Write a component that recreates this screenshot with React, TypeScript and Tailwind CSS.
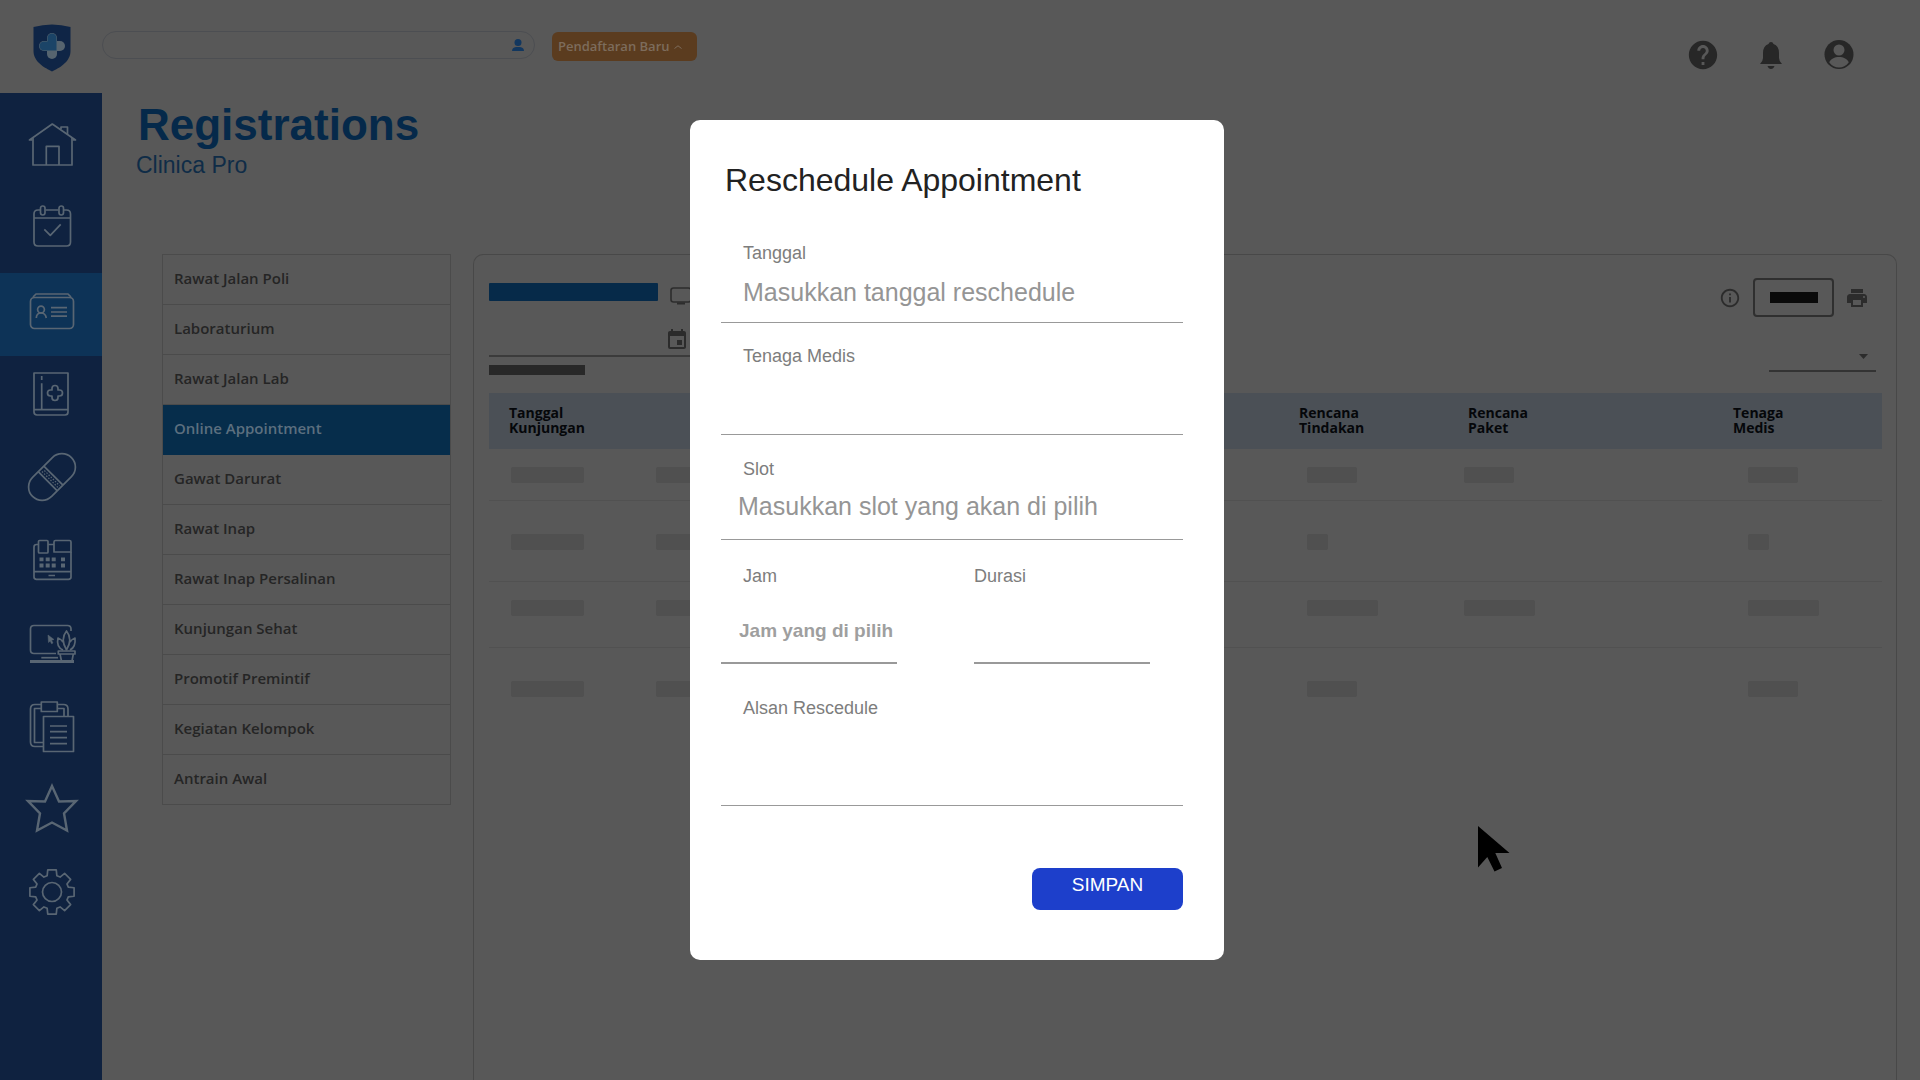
import React from "react";
import { MdPrint, MdInfoOutline, MdEvent, MdHelp } from "react-icons/md";

const gearPath = (() => {
  const pts: string[] = [];
  for (let i = 0; i < 8; i++) {
    const a = (i * Math.PI) / 4 - Math.PI / 2;
    const corners: [number, number][] = [
      [17, -0.29],
      [22.5, -0.19],
      [22.5, 0.19],
      [17, 0.29],
    ];
    corners.forEach(([r, o]) => {
      pts.push(`${(24 + r * Math.cos(a + o)).toFixed(2)} ${(24 + r * Math.sin(a + o)).toFixed(2)}`);
    });
  }
  return `M${pts.join("L")}Z`;
})();

const navItems: { label: string; active?: boolean; drawing: React.ReactNode }[] = [
  {
    label: "Beranda",
    drawing: (
      <>
        <path d="M5 17V44H44V17" />
        <path d="M4.5 19H1.5L24.3 3L47.5 19H44.5" />
        <path d="M33 8V6H39.5V13" />
        <path d="M18.3 44V25.3H31V44" />
      </>
    ),
  },
  {
    label: "Jadwal",
    drawing: (
      <>
        <path d="M12 6H10Q6 6 6 10V38Q6 42 10 42H38.500Q42.500 42 42.500 38V10Q42.500 6 38.500 6H36M17.500 6H30.500M6 14H42.500" />
        <rect x="12.500" y="2" width="4.500" height="9" rx="2.200" />
        <rect x="31" y="2" width="4.500" height="9" rx="2.200" />
        <path d="M16.300 25.300L22.300 31.300L32.700 20.300" />
      </>
    ),
  },
  {
    label: "Registrasi",
    active: true,
    drawing: (
      <>
        <rect x="2.500" y="10.500" width="43" height="31" rx="4" />
        <path d="M5 10L8 7H40L43 10" />
        <circle cx="13" cy="22.500" r="3.400" />
        <path d="M8.300 31Q8.500 26 13 26T18.300 31" />
        <path d="M23 20.700H39M23 25H39M23 29.200H39" />
      </>
    ),
  },
  {
    label: "Rekam medis",
    drawing: (
      <>
        <path d="M6 3H40V42Q40 45 37 45H9Q6 45 6 42ZM6 39.700H40M13.700 13.300V39.700M13.700 6V10" />
        <path d="M24 20V18.500A3 3 0 0 1 30 18.500V20H31.500A3 3 0 0 1 31.500 26H30V27.500A3 3 0 0 1 24 27.500V26H22.500A3 3 0 0 1 22.500 20Z" />
      </>
    ),
  },
  {
    label: "Farmasi",
    drawing: (
      <g transform="rotate(-45 24 24)">
        <rect x="-3.500" y="10.500" width="55" height="27" rx="13.500" />
        <path d="M18 10.500V37.500M26 10.500V37.500" />
        <path d="M20.800 13V35.500M23.200 14V35.500" strokeDasharray="1.500 1.500" strokeWidth="1.200" />
      </g>
    ),
  },
  {
    label: "Kasir",
    drawing: (
      <>
        <path d="M10 8.500H8.500Q6 8.500 6 11V41Q6 43.300 8.500 43.300H40.500Q43 43.300 43 41V16M20 8.500H26M6 35.700H43M20.500 39.500H27" />
        <rect x="10.500" y="4.500" width="9.500" height="12.500" rx="1" />
        <path d="M26 16V6Q26 4.500 27.500 4.500H41.500Q43 4.500 43 6V16Z" />
        <path d="M11.500 23.300H15.500M17.700 23.300H21.700M23.700 23.300H27.700M33 23.300H37M11.500 29.500H15.500M17.700 29.500H21.700M23.700 29.500H27.700M33 29.500H37" strokeWidth="3.800" />
      </>
    ),
  },
  {
    label: "Ruang kerja",
    drawing: (
      <>
        <path d="M28 34.500H6Q2.500 34.500 2.500 31V10Q2.500 6.500 6 6.500H39.500Q43 6.500 43 10V12" />
        <path d="M13.300 38.700H30" />
        <path d="M2 42.500H46" strokeWidth="2.800" />
        <path d="M20 16L26 20.500L23.600 21.200L25 24L23.500 24.700L22.200 22L20.500 23.500Z" fill="currentColor" strokeWidth="0.500" />
        <path d="M30.300 32H47V35H30.300ZM32 35L33.500 42M45.300 35L44 42" />
        <path d="M38.500 31Q32 20 38.500 12Q45 20 38.500 31M35 31Q28 28 30 19Q33 20 35 23M42 31Q48 28 47 19Q44 20 42 23" />
      </>
    ),
  },
  {
    label: "Laporan",
    drawing: (
      <>
        <path d="M13 2.500H7Q2.500 2.500 2.500 7V40Q2.500 44.500 7 44.500H15M29.500 2.500H35.500Q40 2.500 40 7V14" />
        <path d="M13 6.500H6.500V40.500H15M29.500 6.500H36V14" />
        <rect x="13.300" y="0" width="16" height="9.500" />
        <rect x="15.500" y="14.500" width="30" height="35" />
        <path d="M22 24H39M22 29.700H39M22 35.700H39M22 41.700H39" />
      </>
    ),
  },
  {
    label: "Favorit",
    drawing: (
      <path
        strokeWidth="2.400"
        strokeLinejoin="miter"
        d="M24 1L31 16.500L48 16L36 28.300L39 45.500L24 37.500L9 45.500L12 28.300L0 16L17 16.500Z"
      />
    ),
  },
  {
    label: "Pengaturan",
    drawing: (
      <>
        <path d={gearPath} />
        <circle cx="24" cy="24" r="9.500" />
      </>
    ),
  },
];

const categories = [
  "Rawat Jalan Poli",
  "Laboraturium",
  "Rawat Jalan Lab",
  "Online Appointment",
  "Gawat Darurat",
  "Rawat Inap",
  "Rawat Inap Persalinan",
  "Kunjungan Sehat",
  "Promotif Premintif",
  "Kegiatan Kelompok",
  "Antrain Awal",
];

const rows = [
  { size: "h-[51px]", pad: "pt-[18px]", bar: "w-[50px]", paket: true },
  { size: "h-[81px]", pad: "pt-[33px]", bar: "w-[21px]", paket: false },
  { size: "h-[66px]", pad: "pt-[18px]", bar: "w-[71px]", paket: true },
  { size: "h-[84px]", pad: "pt-[33px]", bar: "w-[50px]", paket: false },
];

function Header() {
  return (
    <header className="flex h-[93px] shrink-0 items-start">
      <a href="#" aria-label="Clinica Pro" className="flex w-[102px] shrink-0 justify-center pt-[24px]">
        <svg width="38" height="48" viewBox="0 0 38 48" className="ml-[2px]">
          <path d="M.5 3Q19-2 37.500 3V27C37.500 38 26 44 19 47.500C12 44 .5 38 .5 27Z" fill="#0f2546" />
          <rect x="14" y="9" width="10" height="26" rx="5" fill="#56646f" />
          <rect x="6" y="17" width="26" height="10" rx="5" fill="#56646f" />
          <path d="M14.500 17.500V14A4.500 4.500 0 0 1 23.500 14V26.500H11A4.500 4.500 0 0 1 11 17.500Z" fill="#1b4467" />
        </svg>
      </a>
      <div className="relative mt-[31px] w-[433px]">
        <input
          type="text"
          aria-label="Cari pasien"
          className="h-7 w-full rounded-full border border-[#4c4e52] bg-transparent pr-10 pl-4 text-sm outline-none"
        />
        <svg width="12" height="12" viewBox="0 0 12 12" className="absolute top-2 right-[11px]" fill="#12375f">
          <circle cx="6" cy="3.500" r="3.500" />
          <path d="M0 12Q0 8.500 4 8H8Q12 8.500 12 12Z" />
        </svg>
      </div>
      <button
        type="button"
        className="mt-8 ml-[17px] flex h-[29px] w-[145px] items-center gap-1 rounded-md bg-[#5b3c1f] pl-[6px] font-['Open_Sans',sans-serif] text-[13px] font-semibold text-[#7d6c5c]"
      >
        Pendaftaran Baru
        <svg width="8" height="4" viewBox="0 0 8 4" fill="none" stroke="currentColor">
          <path d="M.5 3.500L4 .8L7.500 3.500" />
        </svg>
      </button>
      <div className="mt-[38px] mr-[64px] ml-auto flex items-center gap-[34px] text-[#272727]">
        <button type="button" aria-label="Bantuan">
          <MdHelp size={34} />
        </button>
        <button type="button" aria-label="Notifikasi">
          <svg width="34" height="34" viewBox="0 0 34 34" fill="currentColor">
            <path d="M17 4Q19 4 19.500 6Q25 8 25 15V20Q25 23 28 26H6Q9 23 9 20V15Q9 8 14.500 6Q15 4 17 4ZM13.500 28H20.500Q19.500 31 17 31T13.500 28Z" />
          </svg>
        </button>
        <button type="button" aria-label="Profil">
          <svg width="34" height="34" viewBox="0 0 34 34">
            <circle cx="17" cy="16.500" r="14.500" fill="currentColor" />
            <circle cx="17" cy="12" r="5.500" fill="#585858" />
            <path d="M7.300 24.500C8 21 13 19 17 19S26 21 26.700 24.500C24 28 21 29.500 17 29.500S10 28 7.300 24.500Z" fill="#585858" />
          </svg>
        </button>
      </div>
    </header>
  );
}

function Sidebar() {
  return (
    <nav aria-label="Menu utama" className="w-[102px] shrink-0 bg-[#0f2240] pt-[14px]">
      {navItems.map((item) => (
        <a
          key={item.label}
          href="#"
          aria-label={item.label}
          className={
            item.active
              ? "flex h-[83px] items-center justify-center bg-[#0d3357] pb-2 pl-[2px] text-[#596673]"
              : "flex h-[83px] items-center justify-center pb-2 pl-[2px] text-[#596673]"
          }
        >
          <svg
            width="48"
            height="48"
            viewBox="0 0 48 48"
            fill="none"
            stroke="currentColor"
            strokeWidth="1.700"
            strokeLinejoin="round"
            className="overflow-visible"
          >
            {item.drawing}
          </svg>
        </a>
      ))}
    </nav>
  );
}

function Categories() {
  return (
    <ul className="w-[289px] shrink-0 self-start border border-b-0 border-[#4b4b4b] font-['Open_Sans',sans-serif] text-[15px] font-semibold text-[#252525]">
      {categories.map((name) => (
        <li key={name}>
          <a
            href="#"
            className={
              name === "Online Appointment"
                ? "flex h-[50px] items-center border-b border-[#062d4b] bg-[#062d4b] pb-[2px] pl-[11px] text-[#5c6f7f]"
                : "flex h-[50px] items-center border-b border-[#4b4b4b] pb-[2px] pl-[11px]"
            }
          >
            {name}
          </a>
        </li>
      ))}
    </ul>
  );
}

function Bar({ width }: { width: string }) {
  return <div className={`h-4 rounded-xs bg-[#505050] ${width}`} />;
}

function RegistrationsPanel() {
  return (
    <section className="min-w-0 flex-1 rounded-t-[10px] border border-b-0 border-[#484848] pr-[14px] pl-[15px]">
      <div className="flex h-[138px] items-start justify-between">
        <div className="w-[220px] pt-7">
          <div className="flex h-[22px] gap-3">
            <div className="h-[18px] w-[169px] rounded-[1px] bg-[#062a49]" />
            <svg width="22" height="18" viewBox="0 0 22 18" fill="none" stroke="#2d2d2d" className="mt-1">
              <rect x="1" y="1" width="20" height="14" rx="2.500" strokeWidth="1.600" />
              <path d="M7 16.500H15" strokeWidth="2" />
            </svg>
          </div>
          <div className="relative mt-[21px]">
            <input
              type="text"
              aria-label="Tanggal kunjungan"
              className="h-[31px] w-full border-b-2 border-[#3b3b3b] bg-transparent outline-none"
            />
            <MdEvent size={24} color="#2b2b2b" className="absolute top-[2px] left-[176px]" />
          </div>
          <div className="mt-2 h-[10px] w-24 bg-[#282828]" />
        </div>
        <div className="flex flex-col items-end pt-[23px]">
          <div className="flex items-center pr-[13px] text-[#2c2c2c]">
            <MdInfoOutline size={22} />
            <button
              type="button"
              aria-label="Filter"
              className="ml-3 flex h-[39px] w-[81px] items-center justify-center rounded border-2 border-[#2f2f2f]"
            >
              <span className="h-[11px] w-12 bg-[#0a0a0a]" />
            </button>
            <MdPrint size={24} className="ml-[11px]" />
          </div>
          <div className="relative mt-[23px] mr-[6px] w-[107px]">
            <select
              aria-label="Urutkan"
              className="h-8 w-full appearance-none border-b-2 border-[#333] bg-transparent outline-none"
            />
            <svg width="9" height="5" viewBox="0 0 9 5" fill="#2c2c2c" className="pointer-events-none absolute top-[14px] right-2">
              <path d="M0 0H9L4.500 5Z" />
            </svg>
          </div>
        </div>
      </div>
      <table className="w-full table-fixed border-collapse">
        <colgroup>
          <col className="w-[146px]" />
          <col />
          <col className="w-[169px]" />
          <col className="w-[265px]" />
          <col className="w-[169px]" />
        </colgroup>
        <thead>
          <tr className="h-[56px] bg-[#4b5056] text-left font-['Open_Sans',sans-serif] text-[14px] leading-[15px] font-bold text-[#05070a]">
            <th className="pb-[2px] pl-[20px]">
              Tanggal
              <br />
              Kunjungan
            </th>
            <th />
            <th className="pb-[2px] pl-[20px]">
              Rencana
              <br />
              Tindakan
            </th>
            <th className="pb-[2px] pl-[20px]">
              Rencana
              <br />
              Paket
            </th>
            <th className="pb-[2px] pl-[20px]">
              Tenaga
              <br />
              Medis
            </th>
          </tr>
        </thead>
        <tbody>
          {rows.map((row, i) => (
            <tr key={i} className={`border-b border-[#515151] align-top last:border-b-0 ${row.size}`}>
              <td className={`pl-[22px] ${row.pad}`}>
                <Bar width="w-[73px]" />
              </td>
              <td className={`pl-[21px] ${row.pad}`}>
                <Bar width="w-[73px]" />
              </td>
              <td className={`pl-7 ${row.pad}`}>
                <Bar width={row.bar} />
              </td>
              <td className={`pl-4 ${row.pad}`}>{row.paket && <Bar width={row.bar} />}</td>
              <td className={`pl-[35px] ${row.pad}`}>
                <Bar width={row.bar} />
              </td>
            </tr>
          ))}
        </tbody>
      </table>
    </section>
  );
}

const labelClass = "block pl-[22px] text-[18px] leading-6 text-[#7d7d7d]";
const fieldClass =
  "block w-full border-[#999] bg-transparent text-[25px] text-[#333] outline-none placeholder:text-[#959595] placeholder:opacity-100";

function RescheduleDialog() {
  return (
    <div
      role="dialog"
      aria-modal="true"
      aria-labelledby="reschedule-title"
      className="w-[534px] rounded-[10px] bg-white pt-10 pr-[41px] pb-[50px] pl-[31px]"
    >
      <h2 id="reschedule-title" className="pl-1 text-[32px] leading-10 text-[#222]">
        Reschedule Appointment
      </h2>
      <form className="mt-[41px] flex flex-col" onSubmit={(e) => e.preventDefault()}>
        <label htmlFor="tanggal" className={labelClass}>
          Tanggal
        </label>
        <input
          id="tanggal"
          type="text"
          placeholder="Masukkan tanggal reschedule"
          className={`h-[58px] border-b pb-[2px] pl-[22px] ${fieldClass}`}
        />
        <label htmlFor="tenaga" className={`mt-[21px] ${labelClass}`}>
          Tenaga Medis
        </label>
        <input id="tenaga" type="text" className={`h-[67px] border-b pl-[22px] ${fieldClass}`} />
        <label htmlFor="slot" className={`mt-[22px] ${labelClass}`}>
          Slot
        </label>
        <input
          id="slot"
          type="text"
          placeholder="Masukkan slot yang akan di pilih"
          className={`h-[59px] border-b pb-2 pl-[17px] ${fieldClass}`}
        />
        <div className="mt-6 flex gap-[77px]">
          <div className="w-44">
            <label htmlFor="jam" className={labelClass}>
              Jam
            </label>
            <input
              id="jam"
              type="text"
              placeholder="Jam yang di pilih"
              className="block h-[76px] w-full border-b-2 border-[#999] bg-transparent pt-3 pl-[18px] text-[19px] font-bold text-[#333] outline-none placeholder:text-[#9f9f9f] placeholder:opacity-100"
            />
          </div>
          <div className="w-44">
            <label htmlFor="durasi" className="block text-[18px] leading-6 text-[#7d7d7d]">
              Durasi
            </label>
            <input id="durasi" type="text" className={`h-[76px] border-b-2 ${fieldClass}`} />
          </div>
        </div>
        <label htmlFor="alasan" className={`mt-8 ${labelClass}`}>
          Alsan Rescedule
        </label>
        <textarea id="alasan" className={`h-[86px] resize-none border-b px-[22px] ${fieldClass}`} />
        <button
          type="submit"
          className="mt-[62px] h-[42px] w-[151px] self-end rounded-lg bg-[#1d3fcb] pb-2 text-[19px] text-white"
        >
          SIMPAN
        </button>
      </form>
    </div>
  );
}

export default function App() {
  return (
    <div className="relative flex min-h-screen flex-col overflow-hidden bg-[#585858] font-['Liberation_Sans',Arial,sans-serif]">
      <Header />
      <div className="flex flex-1">
        <Sidebar />
        <main className="flex min-w-0 flex-1 flex-col">
          <div className="pt-2 pl-[34px]">
            <h1 className="pl-[2px] text-[44px] leading-[48px] font-bold text-[#05294a]">Registrations</h1>
            <p className="pt-[2px] text-[23px] leading-7 text-[#0f2c47]">Clinica Pro</p>
          </div>
          <div className="mt-[75px] flex flex-1 gap-[22px] pr-[23px] pl-[60px]">
            <Categories />
            <RegistrationsPanel />
          </div>
        </main>
      </div>
      <div className="fixed inset-0 flex items-center justify-center pr-[6px]">
        <RescheduleDialog />
      </div>
      <svg
        width="34"
        height="46"
        viewBox="0 0 34 46"
        aria-hidden="true"
        className="pointer-events-none absolute top-[826px] left-[1478px]"
      >
        <path d="M0 0V41.500L9.300 31L16.500 45.500L24 42L17.300 27H31.500Z" />
      </svg>
    </div>
  );
}
